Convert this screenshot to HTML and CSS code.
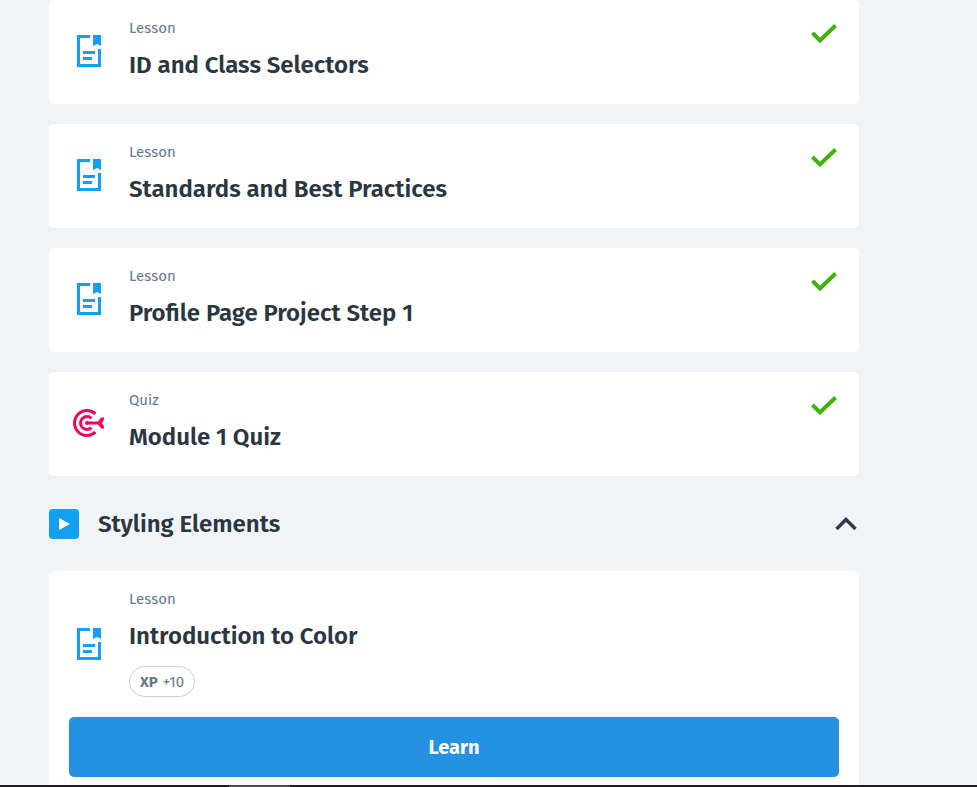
FILE: index.html
```html
<!DOCTYPE html>
<html lang="en">
<head>
<meta charset="utf-8">
<title>Course modules</title>
<link rel="stylesheet" href="styles.css">
</head>
<body>
<svg class="sprite" aria-hidden="true">
  <symbol id="lesson" viewBox="0 0 24 32">
    <path d="M13 0H0v32h24V14h-3v15H3V3h10z"/>
    <path d="M16 0h8v11l-4-2-4 2z"/>
    <path d="M6 16h12v3H6zM6 22h9v3H6z"/>
  </symbol>
  <symbol id="check" viewBox="0 0 26 20">
    <path d="M1.500 9l7.500 7.500L24.500 1.500" fill="none" stroke="currentColor" stroke-width="4"/>
  </symbol>
</svg>
<main class="course">
  <ul class="cards">
    <li class="card">
      <div class="summary">
        <svg class="icon lesson"><use href="#lesson"/></svg>
        <div class="text"><p class="kind">Lesson</p><h3 class="title">ID and Class Selectors</h3></div>
        <svg class="check" role="img" aria-label="Completed"><use href="#check"/></svg>
      </div>
    </li>
    <li class="card">
      <div class="summary">
        <svg class="icon lesson"><use href="#lesson"/></svg>
        <div class="text"><p class="kind">Lesson</p><h3 class="title">Standards and Best Practices</h3></div>
        <svg class="check" role="img" aria-label="Completed"><use href="#check"/></svg>
      </div>
    </li>
    <li class="card">
      <div class="summary">
        <svg class="icon lesson"><use href="#lesson"/></svg>
        <div class="text"><p class="kind">Lesson</p><h3 class="title">Profile Page Project Step 1</h3></div>
        <svg class="check" role="img" aria-label="Completed"><use href="#check"/></svg>
      </div>
    </li>
    <li class="card">
      <div class="summary">
        <svg class="icon quiz" viewBox="0 0 32 30">
          <g fill="none" stroke="currentColor" stroke-width="3">
            <path d="M22.500 5.800A12.500 12.500 0 1 0 22.500 24.200"/>
            <path d="M18.500 10.300A6.500 6.500 0 1 0 18.500 19.700"/>
            <path d="M14 15h13"/>
          </g>
          <path d="M24 15l4-5.500h3v2L29 15l2 3.500v2h-3z"/>
          <circle cx="14" cy="15" r="2"/>
        </svg>
        <div class="text"><p class="kind">Quiz</p><h3 class="title">Module 1 Quiz</h3></div>
        <svg class="check" role="img" aria-label="Completed"><use href="#check"/></svg>
      </div>
    </li>
  </ul>

  <header class="module">
    <svg class="play" viewBox="0 0 30 30"><rect width="30" height="30" rx="4"/><path d="M10 9l11 6-11 6z" fill="#fff"/></svg>
    <h2 class="title">Styling Elements</h2>
    <button class="toggle" type="button" aria-label="Collapse module">
      <svg class="chevron" viewBox="0 0 22 14"><path d="M1.500 12L11 2.500l9.500 9.500" fill="none" stroke="currentColor" stroke-width="3.500"/></svg>
    </button>
  </header>

  <section class="card">
    <div class="summary">
      <svg class="icon lesson"><use href="#lesson"/></svg>
      <div class="text">
        <p class="kind">Lesson</p>
        <h3 class="title">Introduction to Color</h3>
        <p class="xp"><b>XP</b> <span>+10</span></p>
      </div>
    </div>
    <button class="learn" type="button">Learn</button>
  </section>
</main>
<div class="scrollbar"><div class="thumb"></div></div>
</body>
</html>
```
FILE: styles.css
```css
* {
  box-sizing: border-box;
}

body {
  margin: 0;
  height: 100vh;
  overflow: hidden;
  background: #f0f4f7;
  color: #2b3643;
  font-family: "Fira Sans", Roboto, "Noto Sans", sans-serif;
}

h2, h3, p, ul {
  margin: 0;
  padding: 0;
}

.sprite {
  position: absolute;
  width: 0;
  height: 0;
}

.course {
  padding: 0 118px 0 49px;
}

.cards {
  display: flex;
  flex-direction: column;
  gap: 20px;
  list-style: none;
}

.card {
  padding: 20px 20px 22px;
  border-radius: 5px;
  background: #fff;
}

.summary {
  display: flex;
  align-items: center;
  gap: 24px;
}

.icon {
  flex: none;
  width: 32px;
  height: 32px;
  margin-left: 4px;
  fill: currentColor;
}

.lesson {
  color: #159ff3;
}

.quiz {
  color: #f0055a;
}

.text {
  flex: 1;
}

.kind {
  color: #66798f;
  font-size: 15px;
  line-height: 16px;
}

.title {
  font-size: 24px;
  font-weight: 600;
  line-height: 34px;
}

.text .title {
  margin-top: 12px;
}

.check {
  align-self: flex-start;
  width: 26px;
  height: 20px;
  margin: 4px 2px 0 0;
  color: #3eb30a;
}

.xp {
  display: flex;
  align-items: center;
  gap: 5px;
  width: max-content;
  height: 31px;
  margin-top: 13px;
  padding: 0 10px;
  border: 1px solid #c6d0da;
  border-radius: 16px;
  color: #66798f;
  font-size: 15px;
}

.module {
  display: flex;
  align-items: center;
  height: 95px;
}

.play {
  width: 30px;
  height: 30px;
  margin-right: 19px;
  fill: #159ff3;
}

.toggle {
  margin-left: auto;
  padding: 0;
  border: 0;
  background: none;
  color: #2f3b4a;
}

.chevron {
  display: block;
  width: 22px;
  height: 14px;
  margin-right: 2px;
}

.learn {
  display: block;
  width: 100%;
  height: 60px;
  margin-top: 20px;
  border: 0;
  border-radius: 5px;
  background: #2492e0;
  color: #fff;
  font: bold 20px "Fira Sans", Roboto, "Noto Sans", sans-serif;
}

.scrollbar {
  position: fixed;
  inset: auto 0 0;
  height: 2px;
  padding-left: 229px;
  background: #1f1c1f;
}

.thumb {
  width: 61px;
  height: 2px;
  background: #4e4c4e;
}
```
